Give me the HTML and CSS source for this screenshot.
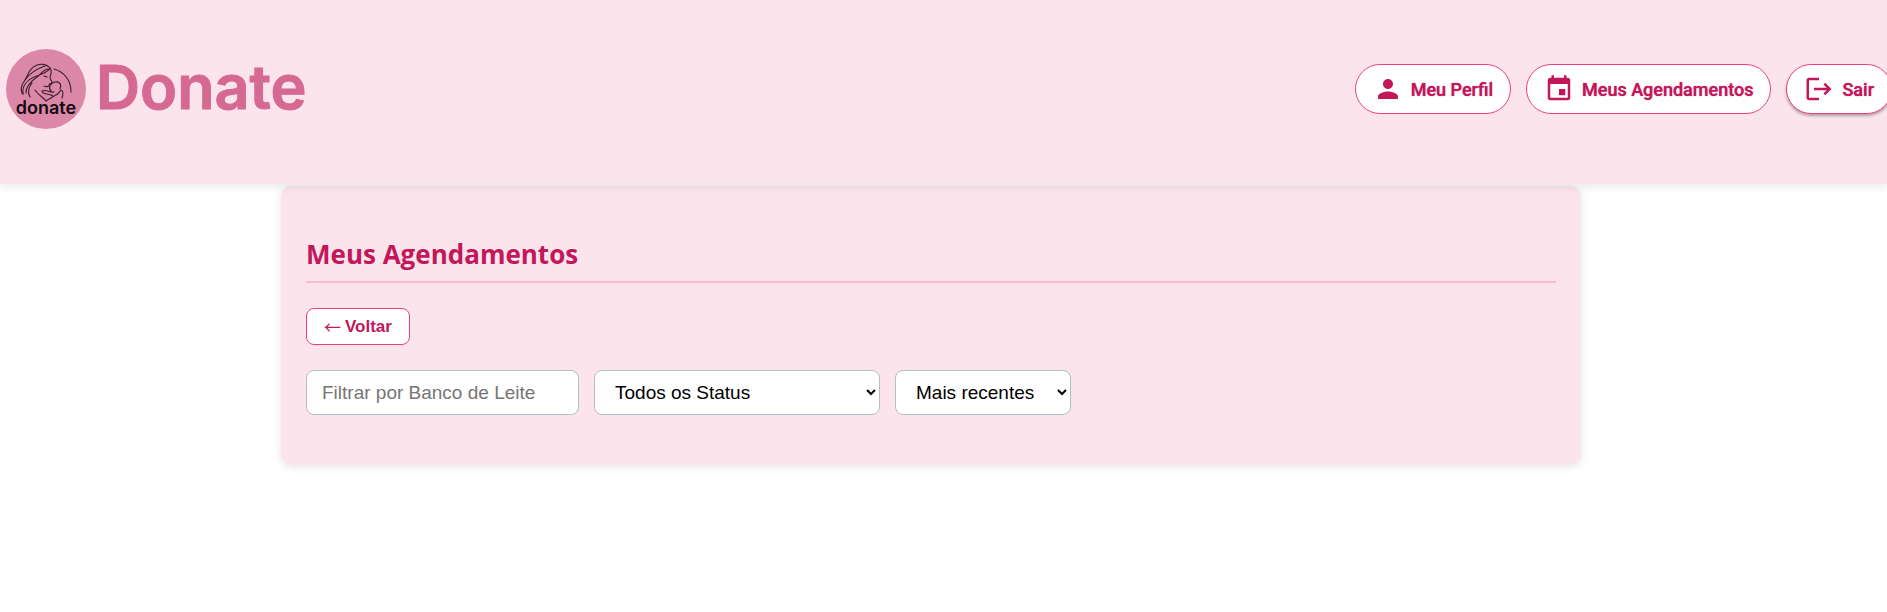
FILE: index.html
```html
<!DOCTYPE html>
<html lang="pt-BR">
<head>
<meta charset="utf-8">
<meta name="viewport" content="width=device-width, initial-scale=1">
<title>Donate - Meus Agendamentos</title>
<link rel="stylesheet" href="styles.css">
</head>
<body>
<header class="header">
  <div class="brand">
    <svg class="brand-logo" viewBox="0 0 80 80" role="img" aria-label="Logo Donate">
      <circle class="logo-disc" cx="40" cy="40" r="40"/>
      <g class="logo-lines">
        <path d="M17 45C14 42 15 36 19 31C22 26 23 20 29 17C34 14 41 15 44 19C47 23 44 26 44 29L46 33C46 35 43 34 43 36C43 38 40 38 38 37"/>
        <path d="M17 45C16 37 21 31 28 28C35 25 42 24 44 19M20 44C20 37 25 32 31 28C35 25 37 21 42 20M19 31C23 25 30 20 39 17M24 48C21 43 23 37 26 34M38 27L41 28"/>
        <path d="M48 20C59 23 65 32 65 43"/>
        <path d="M29 41C32 46 37 48 40 52C45 48 51 47 55 41M45 42C42 39 44 34 49 33C54 32 56 36 54 40M36 42C40 40 44 44 48 43M36 42C36 46 42 44 47 47C50 47 53 44 55 41C58 42 57 46 56 49"/>
      </g>
      <text class="logo-word" x="40" y="65" text-anchor="middle">donate</text>
    </svg>
    <span class="brand-name">Donate</span>
  </div>
  <nav class="nav">
    <button class="nav-button" type="button">
      <svg class="nav-icon" viewBox="0 0 24 24" aria-hidden="true"><path d="M12 12c2.21 0 4-1.79 4-4s-1.79-4-4-4-4 1.79-4 4 1.79 4 4 4zm0 2c-2.67 0-8 1.34-8 4v2h16v-2c0-2.66-5.33-4-8-4z"/></svg>
      Meu Perfil
    </button>
    <button class="nav-button" type="button">
      <svg class="nav-icon" viewBox="0 0 24 24" aria-hidden="true"><path d="M17 12h-5v5h5v-5zM16 1v2H8V1H6v2H5c-1.11 0-1.99.9-1.99 2L3 19c0 1.1.89 2 2 2h14c1.1 0 2-.9 2-2V5c0-1.1-.9-2-2-2h-1V1h-2zm3 18H5V8h14v11z"/></svg>
      Meus Agendamentos
    </button>
    <button class="nav-button nav-button-raised" type="button">
      <svg class="nav-icon" viewBox="0 0 24 24" aria-hidden="true"><path d="M17 7l-1.41 1.41L18.17 11H8v2h10.17l-2.58 2.58L17 17l5-5zM4 5h8V3H4c-1.1 0-2 .9-2 2v14c0 1.1.9 2 2 2h8v-2H4V5z"/></svg>
      Sair
    </button>
  </nav>
</header>
<main class="page">
  <section class="panel">
    <h1 class="panel-title">Meus Agendamentos</h1>
    <button class="back-button" type="button"><span class="back-arrow">←</span> Voltar</button>
    <form class="filters">
      <input class="field field-bank" type="text" placeholder="Filtrar por Banco de Leite" aria-label="Filtrar por Banco de Leite">
      <select class="field field-status" aria-label="Status">
        <option>Todos os Status</option>
        <option>Confirmado</option>
        <option>Cancelado</option>
      </select>
      <select class="field field-order" aria-label="Ordem">
        <option>Mais recentes</option>
        <option>Mais antigos</option>
      </select>
    </form>
  </section>
</main>
</body>
</html>
```

FILE: styles.css
```css
* {
  box-sizing: border-box;
}

body {
  min-height: 100vh;
  margin: 0;
  background: #fff;
  font-family: "Open Sans", "Noto Sans", sans-serif;
  overflow-x: hidden;
}

.header {
  position: relative;
  z-index: 1;
  display: flex;
  align-items: center;
  justify-content: space-between;
  padding: 49px 0 55px 6px;
  background: #fce4ec;
  box-shadow: 0 2px 10px rgba(0, 0, 0, 0.1);
}

.brand {
  display: flex;
  align-items: flex-start;
  gap: 10px;
}

.brand-logo {
  width: 80px;
  height: 80px;
}

.logo-disc {
  fill: #db88a8;
}

.logo-lines {
  fill: none;
  stroke: #3a1f2b;
  stroke-width: 1.1;
  stroke-linecap: round;
  stroke-linejoin: round;
}

.logo-word {
  fill: #140a0f;
  font: 600 18px Inter, sans-serif;
}

.brand-name {
  color: #d66991;
  font: 600 61px/76px Inter, sans-serif;
  -webkit-text-stroke: 1px #d66991;
}

.nav {
  display: flex;
  gap: 15px;
  margin-right: -5px;
}

.nav-button {
  display: flex;
  align-items: center;
  gap: 8px;
  height: 50px;
  padding: 0 17px;
  border: 1px solid #ec407a;
  border-radius: 25px;
  background: #fff;
  color: #c2185b;
  font: 500 18px Roboto, sans-serif;
  text-shadow: 0 0 1px #c2185b;
  white-space: nowrap;
}

.nav-button-raised {
  box-shadow: 0 2px 3px rgba(0, 0, 0, 0.3);
}

.nav-icon {
  width: 30px;
  height: 30px;
  fill: currentColor;
}

.page {
  padding: 2px 25px 40px 0;
}

.panel {
  max-width: 1300px;
  margin: 0 auto;
  padding: 25px 25px 50px;
  border-radius: 10px;
  background: #fce4ec;
  box-shadow: 0 2px 10px rgba(0, 0, 0, 0.1);
}

.panel-title {
  margin: 25px 0;
  padding-bottom: 8px;
  border-bottom: 2px solid #f8bbd0;
  color: #c2185b;
  font-size: 26px;
  font-weight: 700;
  line-height: 37px;
}

.back-button {
  display: flex;
  align-items: center;
  gap: 4px;
  height: 37px;
  margin-bottom: 25px;
  padding: 0 17px;
  border: 1px solid #ec407a;
  border-radius: 8px;
  background: #fff;
  color: #c2185b;
  font: 700 17px "Liberation Sans", sans-serif;
}

.back-arrow {
  font: 400 17px "Noto Sans CJK JP", sans-serif;
}

.filters {
  display: flex;
  flex-wrap: wrap;
  gap: 15px;
}

.field {
  height: 45px;
  padding: 0 15px;
  border: 1px solid #b0bec5;
  border-radius: 8px;
  background: #fff;
  color: #000;
  font: 19px "Liberation Sans", sans-serif;
}

.field-bank {
  width: 273px;
}

.field-status {
  width: 286px;
}

.field-order {
  width: 176px;
}

select.field {
  padding: 0 0 0 16px;
}
```
